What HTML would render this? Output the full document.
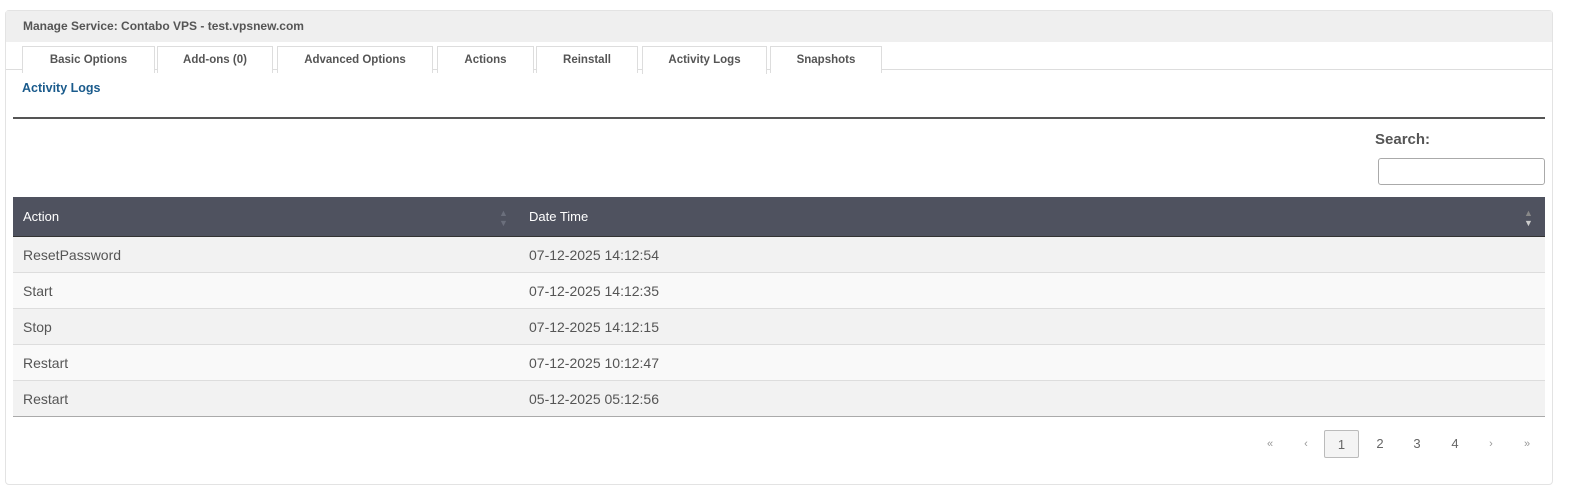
<!DOCTYPE html>
<html><head><style>
body{margin:0;background:#fff;font-family:"Liberation Sans",sans-serif;width:1573px;height:496px;position:relative;overflow:hidden}
.panel{position:absolute;left:5px;top:10px;width:1546px;height:473px;border:1px solid #e3e3e3;border-radius:4px;background:#fff}
.hd{position:absolute;left:0;top:0;right:0;height:31px;background:#efefef;font-size:12px;font-weight:bold;color:#555;line-height:31px;padding-left:17px}
.tabline{position:absolute;left:0;right:0;top:58px;border-top:1px solid #ddd}
.tab{position:absolute;top:35px;height:27px;border:1px solid #ddd;border-bottom:none;background:#fff;font-size:11.5px;font-weight:bold;color:#555;text-align:center;line-height:27px;box-sizing:border-box}
.t{position:absolute;font-size:14px;color:#555}
.row{position:absolute;left:13px;width:1532px;height:36px;border-bottom:1px solid #ddd;box-sizing:border-box;font-size:14px;color:#555;line-height:36px}
.row span{position:absolute;left:10px}
.row b{font-weight:normal;position:absolute;left:516px}
.pg{position:absolute;top:430px;font-size:13px;color:#666;width:36px;text-align:center;line-height:28px;height:28px}
</style></head><body>
<div class="panel">
<div class="hd">Manage Service: Contabo VPS - test.vpsnew.com</div>
<div class="tabline"></div>
<div class="tab" style="left:16px;width:133px">Basic Options</div>
<div class="tab" style="left:151px;width:116px">Add-ons (0)</div>
<div class="tab" style="left:271px;width:156px">Advanced Options</div>
<div class="tab" style="left:431px;width:97px">Actions</div>
<div class="tab" style="left:530px;width:102px">Reinstall</div>
<div class="tab" style="left:636px;width:125px;height:28px">Activity Logs</div>
<div class="tab" style="left:764px;width:112px">Snapshots</div>
</div>
<div style="position:absolute;left:22px;top:81px;font-size:12.5px;font-weight:bold;color:#1a5b8c">Activity Logs</div>
<div style="position:absolute;left:13px;top:117px;width:1532px;height:2px;background:#555"></div>
<div style="position:absolute;left:1375px;top:131px;font-size:15px;font-weight:bold;color:#555">Search:</div>
<div style="position:absolute;left:1378px;top:158px;width:165px;height:25px;border:1px solid #aaa;border-radius:3px"></div>
<div style="position:absolute;left:13px;top:197px;width:1532px;height:40px;background:#4f525f;border-bottom:1px solid #333;box-sizing:border-box;color:#fff;font-size:13px;line-height:40px">
<span style="position:absolute;left:10px">Action</span><span style="position:absolute;left:486px;color:#6b6f7c;font-size:9px;line-height:10px;top:11px">▲<br>▼</span>
<span style="position:absolute;left:516px">Date Time</span><span style="position:absolute;left:1511px;font-size:9px;line-height:10px;top:11px;color:#888">▲<br><span style="color:#ccc">▼</span></span>
</div>
<div class="row" style="top:237px;background:#f2f2f2"><span>ResetPassword</span><b>07-12-2025 14:12:54</b></div>
<div class="row" style="top:273px;background:#f9f9f9"><span>Start</span><b>07-12-2025 14:12:35</b></div>
<div class="row" style="top:309px;background:#f2f2f2"><span>Stop</span><b>07-12-2025 14:12:15</b></div>
<div class="row" style="top:345px;background:#f9f9f9"><span>Restart</span><b>07-12-2025 10:12:47</b></div>
<div class="row" style="top:381px;background:#f2f2f2;border-bottom:1px solid #aaa"><span>Restart</span><b>05-12-2025 05:12:56</b></div>
<div class="pg" style="left:1252px;color:#999;font-size:11px">«</div>
<div class="pg" style="left:1288px;color:#999;font-size:11px">‹</div>
<div class="pg" style="left:1324px;border:1px solid #bbb;border-radius:2px;background:#f4f4f4;box-sizing:border-box;width:35px">1</div>
<div class="pg" style="left:1362px">2</div>
<div class="pg" style="left:1399px">3</div>
<div class="pg" style="left:1437px">4</div>
<div class="pg" style="left:1473px;color:#999;font-size:11px">›</div>
<div class="pg" style="left:1509px;color:#999;font-size:11px">»</div>
</body></html>
